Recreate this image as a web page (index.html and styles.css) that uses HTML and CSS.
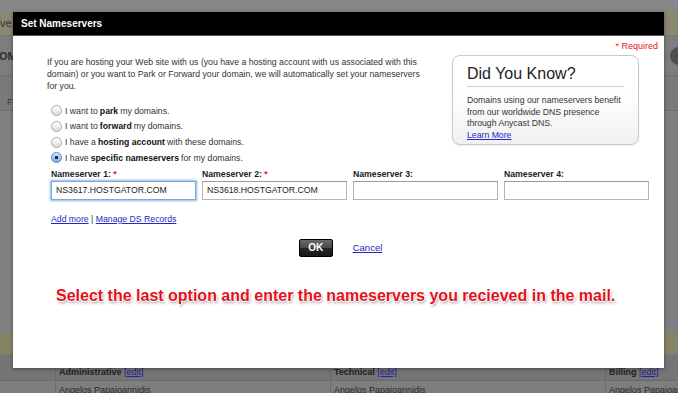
FILE: index.html
```html
<!DOCTYPE html>
<html lang="en">
<head>
    <meta charset="UTF-8">
    <meta name="viewport" content="width=device-width, initial-scale=1.0">
    <title>Set Nameservers</title>
    <link rel="stylesheet" href="styles.css">
</head>
<body>
    <div class="page">
        <div class="topbar"></div>
        <div class="notice">ve.</div>
        <div class="nav">
            <span class="nav-brand">OM</span>
            <span class="nav-dot"></span>
        </div>
        <div class="tabs"><span class="tab">F</span></div>
        <div class="content"></div>
        <div class="notice notice-low"></div>
        <div class="contacts-head">
            <div class="col col-1">Administrative <a href="#">[edit]</a></div>
            <div class="col col-2">Technical <a href="#">[edit]</a></div>
            <div class="col col-3">Billing <a href="#">[edit]</a></div>
        </div>
        <div class="contacts-row">
            <div class="col col-1">Angelos Papaioannidis</div>
            <div class="col col-2">Angelos Papaioannidis</div>
            <div class="col col-3">Angelos Papaioannidis</div>
        </div>
    </div>

    <div class="modal">
        <div class="modal-header">Set Nameservers</div>
        <div class="modal-body">
            <div class="required">* Required</div>

            <div class="main-row">
                <div class="options">
                    <p class="intro">If you are hosting your Web site with us (you have a hosting account with us associated with this domain) or you want to Park or Forward your domain, we will automatically set your nameservers for you.</p>
                    <ul class="radio-list">
                        <li><span class="radio"></span>I want to <b>park</b> my domains.</li>
                        <li><span class="radio"></span>I want to <b>forward</b> my domains.</li>
                        <li><span class="radio"></span>I have a <b>hosting account</b> with these domains.</li>
                        <li><span class="radio checked"></span>I have <b>specific nameservers</b> for my domains.</li>
                    </ul>
                </div>
                <div class="tip-box">
                    <div class="tip-title">Did You Know?</div>
                    <p class="tip-text">Domains using our nameservers benefit from our worldwide DNS presence through Anycast DNS.</p>
                    <a href="#" class="tip-link">Learn More</a>
                </div>
            </div>

            <div class="ns-grid">
                <div class="ns-field">
                    <label>Nameserver 1: <span class="star">*</span></label>
                    <input type="text" class="ns-input focused" value="NS3617.HOSTGATOR.COM">
                </div>
                <div class="ns-field">
                    <label>Nameserver 2: <span class="star">*</span></label>
                    <input type="text" class="ns-input" value="NS3618.HOSTGATOR.COM">
                </div>
                <div class="ns-field">
                    <label>Nameserver 3:</label>
                    <input type="text" class="ns-input" value="">
                </div>
                <div class="ns-field">
                    <label>Nameserver 4:</label>
                    <input type="text" class="ns-input" value="">
                </div>
            </div>

            <div class="links"><a href="#">Add more</a> | <a href="#">Manage DS Records</a></div>

            <div class="actions">
                <button class="btn-ok">OK</button>
                <a href="#" class="cancel">Cancel</a>
            </div>

            <div class="annotation">Select the last option and enter the nameservers you recieved in the mail.</div>
        </div>
    </div>
</body>
</html>
```

FILE: styles.css
```css
body {
    margin: 0;
    width: 678px;
    height: 393px;
    overflow: hidden;
    font-family: "Liberation Sans", Arial, sans-serif;
    background: #7c7c7c;
    position: relative;
}

a {
    color: #2626c8;
}

/* dimmed page behind the dialog */
.page {
    color: #2a2a2a;
    font-size: 9px;
}

.topbar {
    height: 12px;
    background: #878787;
}

.notice {
    height: 23px;
    line-height: 23px;
    background: #8a8871;
    border-bottom: 1px solid #7b7a68;
    font-size: 11px;
    color: #333;
}

.nav {
    height: 39px;
    display: flex;
    align-items: center;
    background: #7d7d7d;
    border-bottom: 1px solid #6f6f6f;
}

.nav-brand {
    font-weight: bold;
    font-size: 11px;
    color: #2f2f2f;
    margin-left: -1px;
}

.nav-dot {
    margin-left: auto;
    margin-right: -10px;
    width: 18px;
    height: 18px;
    border-radius: 50%;
    background: #4e4e4e;
}

.tabs {
    height: 34px;
    background: #7a7a7a;
    border-bottom: 1px solid #6f6f6f;
    display: flex;
    align-items: flex-end;
}

.tab {
    margin-left: 7px;
    margin-bottom: 3px;
    color: #3a3a3a;
}

.content {
    height: 222px;
    background: #7f7f7f;
}

.notice-low {
    height: 21px;
    background: #858467;
}

.contacts-head,
.contacts-row {
    display: flex;
    height: 25px;
    background: #757575;
    border-bottom: 1px solid #6a6a6a;
}

.contacts-row {
    height: 14px;
    background: #7e7e7e;
    border-bottom: 0;
}

.col {
    border-left: 1px solid #6a6a6a;
    padding: 12px 0 0 3px;
    box-sizing: border-box;
    white-space: nowrap;
    overflow: hidden;
}

.contacts-row .col {
    padding-top: 4px;
}

.contacts-head .col {
    font-weight: bold;
    color: #222;
}

.contacts-head a {
    font-weight: normal;
    color: #22229a;
}

.col-1 { margin-left: 55px; width: 275px; }
.col-2 { width: 275px; }
.col-3 { flex: 1; }

/* dialog */
.modal {
    position: absolute;
    left: 13px;
    top: 12px;
    width: 651px;
    height: 356px;
    background: #fff;
    box-shadow: 0 1px 4px rgba(0,0,0,0.4);
}

.modal-header {
    height: 23px;
    line-height: 23px;
    background: #000;
    border-bottom: 1px solid #555;
    color: #fff;
    font-weight: bold;
    font-size: 10px;
    padding-left: 8px;
}

.modal-body {
    font-size: 8.7px;
    color: #333;
}

.required {
    text-align: right;
    color: #e8141a;
    font-size: 9px;
    line-height: 12px;
    margin-top: 4px;
    padding-right: 6px;
}

.main-row {
    display: flex;
    align-items: flex-start;
}

.options {
    padding-left: 34px;
    width: 384px;
}

.intro {
    margin: 4px 0 0;
    line-height: 12px;
}

.radio-list {
    list-style: none;
    margin: 11px 0 0;
    padding: 0 0 0 4px;
}

.radio-list li {
    display: flex;
    align-items: center;
    height: 15.67px;
}

.radio-list b {
    color: #111;
    margin: 0 2px;
}

.radio {
    width: 11px;
    height: 11px;
    border-radius: 50%;
    border: 1px solid #a8a8a8;
    background: linear-gradient(#fff, #dcdcdc);
    margin-right: 3px;
    box-sizing: border-box;
    flex-shrink: 0;
}

.radio.checked {
    border-color: #5a84b8;
    background: radial-gradient(circle, #1c2b40 0 1.6px, transparent 2px),
                linear-gradient(#d6e7fa, #79aee8);
}

.tip-box {
    margin-left: auto;
    margin-right: 25px;
    margin-top: 3px;
    width: 187px;
    height: 90px;
    box-sizing: border-box;
    border: 1px solid #c9c9c9;
    border-radius: 8px;
    background: linear-gradient(#fff 40%, #f0f0f0);
    padding: 8px 14px 0;
    box-shadow: 0 1px 2px rgba(0,0,0,0.08);
}

.tip-title {
    font-size: 16px;
    color: #222;
    line-height: 19px;
    padding-bottom: 3px;
    border-bottom: 1px solid #cfcfcf;
}

.tip-text {
    margin: 8px 0 0;
    line-height: 11.5px;
    color: #333;
}

.tip-link {
    display: block;
    line-height: 10px;
}

.ns-grid {
    display: grid;
    grid-template-columns: repeat(4, 145px);
    column-gap: 6px;
    padding-left: 38px;
    margin-top: 2px;
}

.ns-field label {
    display: block;
    font-weight: bold;
    color: #222;
    line-height: 12px;
    margin-bottom: 1px;
}

.star {
    color: #e8141a;
}

.ns-input {
    width: 100%;
    height: 19px;
    box-sizing: border-box;
    border: 1px solid #b5b5b5;
    border-top-color: #9a9a9a;
    padding: 0 4px;
    font-family: "Liberation Sans", Arial, sans-serif;
    font-size: 8.7px;
    color: #222;
    outline: none;
}

.ns-input.focused {
    border-color: #7ea6d6;
    box-shadow: 0 0 2px 1px #8db8e8;
}

.links {
    padding-left: 38px;
    margin-top: 13px;
    line-height: 12px;
}

.actions {
    display: flex;
    justify-content: center;
    align-items: center;
    gap: 20px;
    margin-top: 14px;
    padding-left: 4px;
}

.btn-ok {
    width: 34px;
    height: 18px;
    border: 1px solid #000;
    border-radius: 2px;
    background: linear-gradient(#6a6a6a 0%, #4a4a4a 50%, #262626 51%, #1a1a1a 100%);
    color: #fff;
    font-family: "Liberation Sans", Arial, sans-serif;
    font-weight: bold;
    font-size: 10px;
    padding: 0;
}

.cancel {
    font-size: 9.5px;
}

.annotation {
    margin-top: 29px;
    padding-left: 43px;
    font-weight: bold;
    font-size: 16px;
    line-height: 20px;
    color: #e4121c;
    text-shadow: -1px 0 #fff, 1px 0 #fff, 0 -1px #fff, 0 1px #fff,
                 1px 2px 3px rgba(0,0,0,0.45);
}
```
